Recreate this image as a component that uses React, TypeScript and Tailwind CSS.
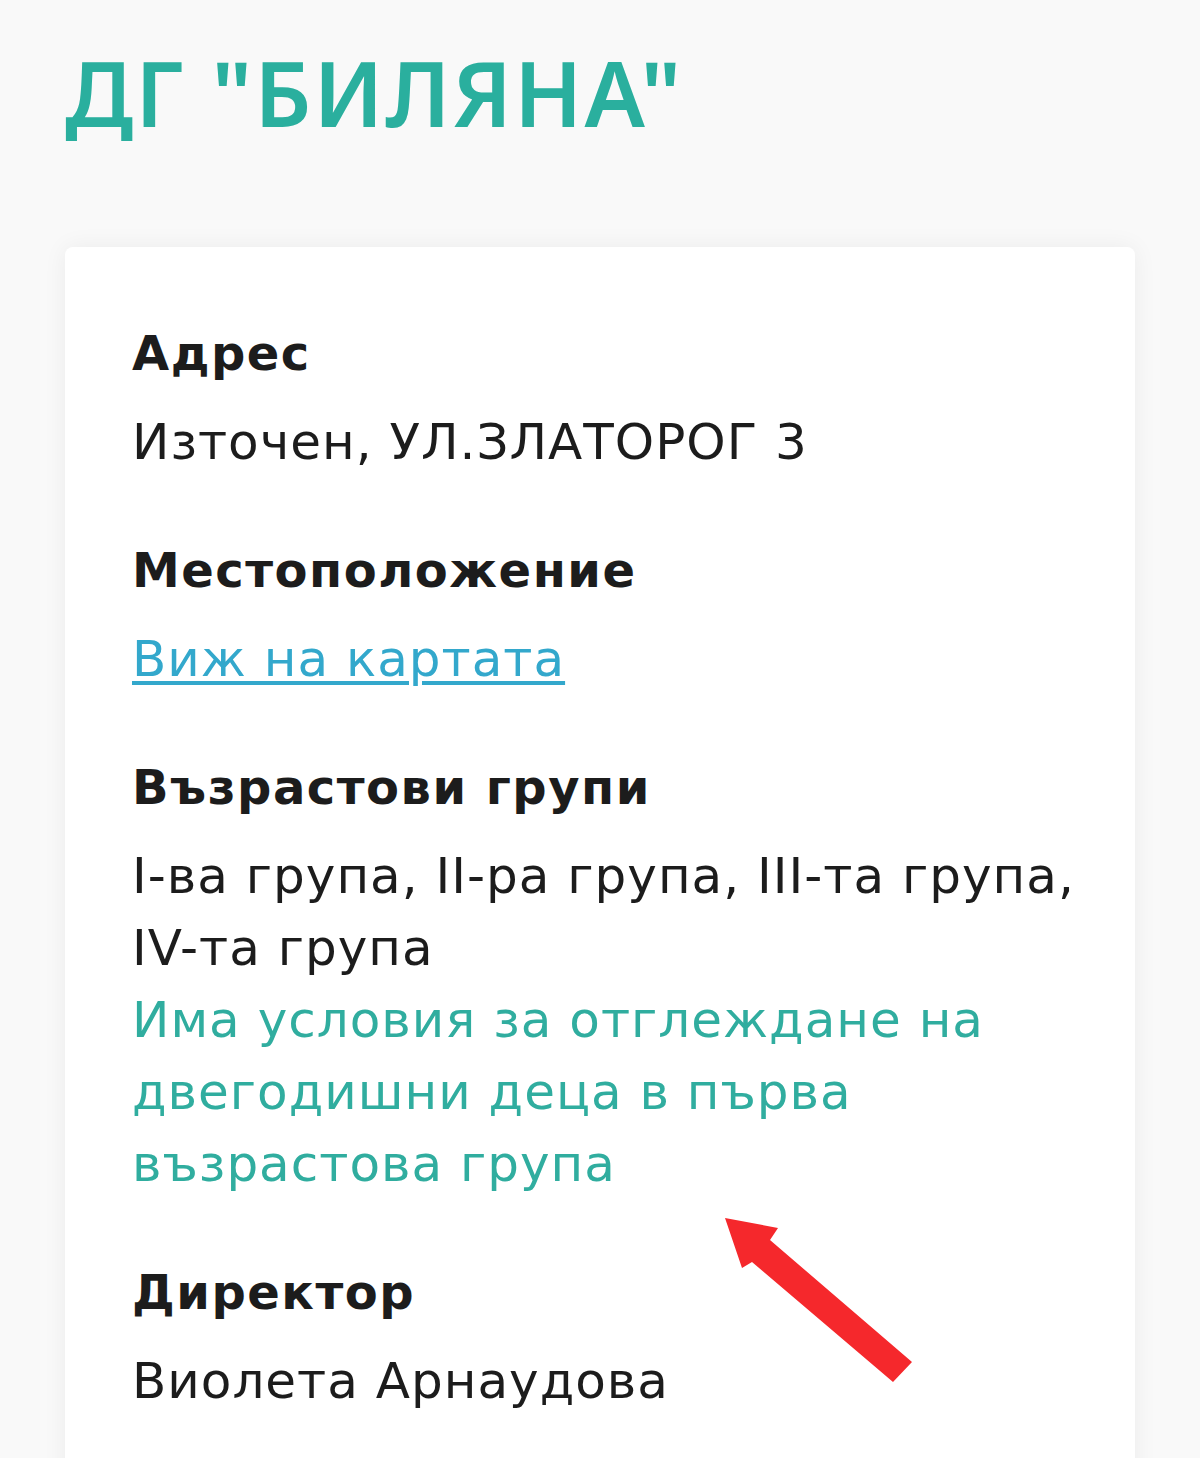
export default function App() {
  const sections: { label: string; lines: React.ReactNode }[] = [
    { label: 'Адрес', lines: <p>Източен, УЛ.ЗЛАТОРОГ 3</p> },
    {
      label: 'Местоположение',
      lines: (
        <a href="#" className="text-[#33a8cc] underline decoration-[4px] underline-offset-[5px]">
          Виж на картата
        </a>
      ),
    },
    {
      label: 'Възрастови групи',
      lines: (
        <>
          <p>I-ва група, II-ра група, III-та група, IV-та група</p>
          <p className="text-[#30ad9f]">Има условия за отглеждане на двегодишни деца в първа възрастова група</p>
        </>
      ),
    },
    { label: 'Директор', lines: <p>Виолета Арнаудова</p> },
  ];

  return (
    <div lang="bg" className="min-h-screen bg-[#f9f9f9] px-[65px] pt-[47px] font-['DejaVu_Sans','Noto_Sans',sans-serif] text-[#1c1c1c]">
      <h1 className="font-['Noto_Sans',sans-serif] text-[90px] font-semibold leading-[90px] tracking-[2px] text-[#2aaf9e]">
        ДГ "БИЛЯНА"
      </h1>
      <div className="relative mt-[110px] rounded-lg bg-white pl-[67px] pr-[40px] pt-[76px] pb-[120px] shadow-[0_0_24px_rgba(0,0,0,0.06)]">
        {sections.map((s) => (
          <section key={s.label} className="mb-[62px]">
            <h2 className="text-[48px] font-bold leading-[60px] tracking-[1.5px]">{s.label}</h2>
            <div className="mt-[23px] text-[50px] leading-[72px] tracking-[1px]">{s.lines}</div>
          </section>
        ))}
        <svg className="absolute left-[660px] top-[971px] h-[166px] w-[190px]" viewBox="0 0 190 166">
          <polygon points="0,0 53,10 45,22 187,144 168,164 27,44 17,50" fill="#f5282c" />
        </svg>
      </div>
    </div>
  );
}
